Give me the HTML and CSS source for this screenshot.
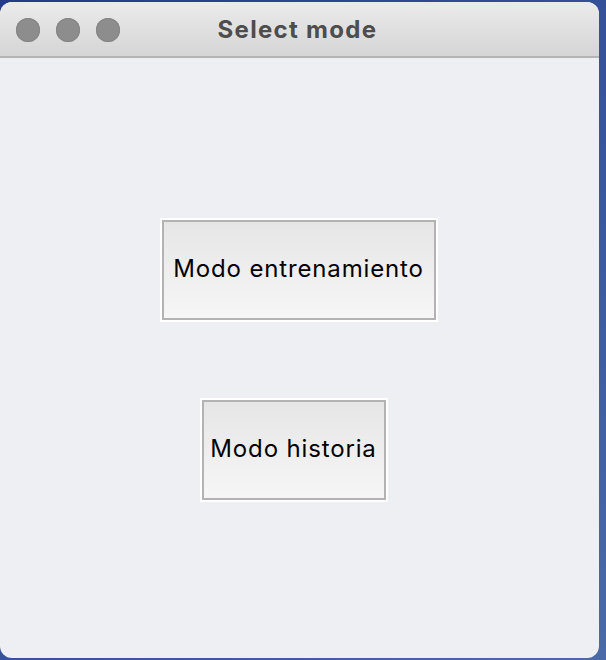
FILE: index.html
```html
<!DOCTYPE html>
<html lang="es">
<head>
<meta charset="utf-8">
<title>Select mode</title>
<link rel="stylesheet" href="styles.css">
</head>
<body>
<div class="window">
  <div class="titlebar">
    <div class="lights">
      <span class="light"></span>
      <span class="light"></span>
      <span class="light"></span>
    </div>
    <div class="title">Select mode</div>
  </div>
  <div class="content">
    <button class="btn btn-wide">Modo entrenamiento</button>
    <button class="btn btn-narrow">Modo historia</button>
  </div>
</div>
</body>
</html>
```
FILE: styles.css
```css
html, body {
  margin: 0;
  padding: 0;
  width: 606px;
  height: 660px;
  overflow: hidden;
}
body {
  background: linear-gradient(135deg, #253a88 0%, #34519a 50%, #4a6aa8 100%);
  font-family: "Inter", "Liberation Sans", sans-serif;
}
.window {
  margin: 2px 7px 0 0;
  width: 599px;
  height: 656px;
  border-radius: 12px;
  background: #eeeff3;
  display: flex;
  flex-direction: column;
  overflow: hidden;
}
.titlebar {
  position: relative;
  height: 54px;
  flex: none;
  background: linear-gradient(#ebebeb, #d5d5d5);
  border-bottom: 2px solid #b4b4b4;
  display: flex;
  align-items: center;
  justify-content: center;
}
.lights {
  position: absolute;
  left: 16px;
  top: 16px;
  display: flex;
  gap: 16px;
}
.light {
  width: 24px;
  height: 24px;
  border-radius: 50%;
  background: #8d8d8d;
  box-shadow: inset 0 0 0 1px #858585;
}
.title {
  font-weight: 700;
  font-size: 24px;
  color: #4d4d4d;
  letter-spacing: 1.3px;
  margin-left: -4px;
}
.content {
  flex: 1;
  display: flex;
  flex-direction: column;
  align-items: center;
  padding-top: 162px;
  gap: 80px;
}
.btn {
  height: 100px;
  box-sizing: border-box;
  border: 2px solid #b3b3b3;
  box-shadow: 0 0 0 2px #ffffff;
  background: linear-gradient(#e6e6e6, #f6f6f6);
  font-family: "Inter", "Liberation Sans", sans-serif;
  font-size: 24px;
  color: #000;
  letter-spacing: 0.85px;
  padding: 0 0 3px;
  margin: 0;
}
.btn-wide { width: 274px; margin-right: 2px; }
.btn-narrow { width: 184px; margin-right: 12px; }
```
